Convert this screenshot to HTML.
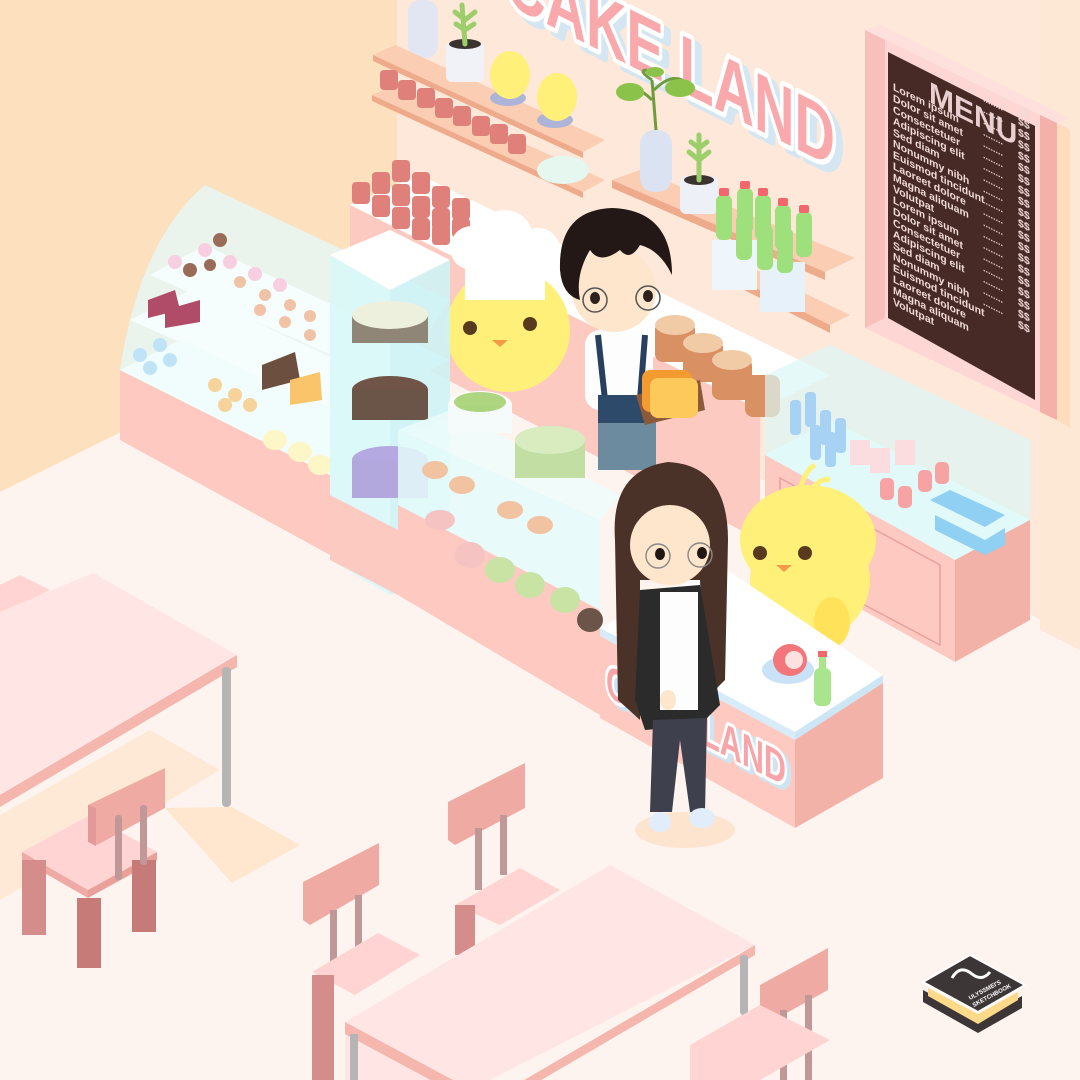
<!DOCTYPE html>
<html><head><meta charset="utf-8"><style>
html,body{margin:0;padding:0;width:1080px;height:1080px;overflow:hidden;background:#fef4ef}
svg{display:block}
text{font-family:"Liberation Sans",sans-serif}
</style></head><body>
<svg width="1080" height="1080" viewBox="0 0 1080 1080" xmlns="http://www.w3.org/2000/svg">
<rect width="1080" height="1080" fill="#fef4ef"/>
<polygon points="0,0 397,0 397,295 0,492" fill="#fde0bd"/>
<polygon points="397,0 1080,0 1080,640 397,295" fill="#fee8d9"/>
<polygon points="1040,0 1080,0 1080,650 1040,630" fill="#fde7d5"/>

<g transform="translate(505,3) skewY(26.57)">
<text x="7" y="4" font-size="82" font-weight="bold" textLength="330" lengthAdjust="spacingAndGlyphs" fill="#d3e6f2" stroke="#d3e6f2" stroke-width="10" stroke-linejoin="round">CAKE LAND</text>
<text x="0" y="0" font-size="82" font-weight="bold" textLength="330" lengthAdjust="spacingAndGlyphs" fill="#fff" stroke="#fff" stroke-width="10" stroke-linejoin="round">CAKE LAND</text>
<text x="0" y="0" font-size="82" font-weight="bold" textLength="330" lengthAdjust="spacingAndGlyphs" fill="#f9a9ab">CAKE LAND</text>
</g>

<polygon points="1057,123 1070,130 1070,428 1057,420" fill="#fedcbc"/>
<polygon points="865,30 880,25 1070,118 1057,123" fill="#ffe0dd"/>
<polygon points="865,30 1057,123 1057,420 865,328" fill="#fed6d3"/>
<polygon points="1040,115 1057,123 1057,420 1040,412" fill="#f4b1a9"/>
<polygon points="865,30 885,40 885,318 865,328" fill="#f7c0ba"/>
<polygon points="888,52 1035,126 1035,400 888,318" fill="#472a26"/>
<g transform="translate(893,90) skewY(26.57)" fill="#f1dad8" font-weight="bold" font-size="10.5">
<text x="36" y="-6" font-size="30" fill="#e9cfd0">MENU</text>
<text x="0" y="0">Lorem ipsum</text><text x="0" y="11.3">Dolor sit amet</text><text x="0" y="22.6">Consectetuer</text><text x="0" y="33.9">Adipiscing elit</text><text x="0" y="45.2">Sed diam</text><text x="0" y="56.5">Nonummy nibh</text><text x="0" y="67.8">Euismod tincidunt</text><text x="0" y="79.1">Laoreet dolore</text><text x="0" y="90.4">Magna aliquam</text><text x="0" y="101.7">Volutpat</text><text x="0" y="113">Lorem ipsum</text><text x="0" y="124.3">Dolor sit amet</text><text x="0" y="135.6">Consectetuer</text><text x="0" y="146.9">Adipiscing elit</text><text x="0" y="158.2">Sed diam</text><text x="0" y="169.5">Nonummy nibh</text><text x="0" y="180.8">Euismod tincidunt</text><text x="0" y="192.1">Laoreet dolore</text><text x="0" y="203.4">Magna aliquam</text><text x="0" y="214.7">Volutpat</text>
<g font-size="9">
<text x="90" y="-34">........</text><text x="90" y="-22.7">........</text><text x="90" y="-11.4">........</text><text x="90" y="0">........</text><text x="90" y="11.3">........</text><text x="90" y="22.6">........</text><text x="90" y="33.9">........</text><text x="90" y="45.2">........</text><text x="90" y="56.5">........</text><text x="90" y="67.8">........</text><text x="90" y="79.1">........</text><text x="90" y="90.4">........</text><text x="90" y="101.7">........</text><text x="90" y="113">........</text><text x="90" y="124.3">........</text><text x="90" y="135.6">........</text><text x="90" y="146.9">........</text><text x="90" y="158.2">........</text><text x="90" y="169.5">........</text>
</g>
<g font-size="10.5">
<text x="125" y="-40">$$</text><text x="125" y="-28.7">$$</text><text x="125" y="-17.4">$$</text><text x="125" y="-6">$$</text><text x="125" y="5.3">$$</text><text x="125" y="16.6">$$</text><text x="125" y="27.9">$$</text><text x="125" y="39.2">$$</text><text x="125" y="50.5">$$</text><text x="125" y="61.8">$$</text><text x="125" y="73.1">$$</text><text x="125" y="84.4">$$</text><text x="125" y="95.7">$$</text><text x="125" y="107">$$</text><text x="125" y="118.3">$$</text><text x="125" y="129.6">$$</text><text x="125" y="140.9">$$</text><text x="125" y="152.2">$$</text><text x="125" y="163.5">$$</text><text x="125" y="174.8">$$</text>
</g>
</g>

<rect x="408" y="0" width="30" height="58" rx="12" fill="#e2e6f2"/>
<polygon points="373,55 395,45 605,140 583,152" fill="#fbcdb2"/>
<polygon points="373,55 583,152 583,158 373,61" fill="#eeab8c"/>
<polygon points="372,95 395,85 605,180 583,192" fill="#fbcdb2"/>
<polygon points="372,95 583,192 583,198 372,101" fill="#eeab8c"/>
<g fill="#e0807a">
<rect x="380" y="70" width="18" height="20" rx="4"/><rect x="398" y="80" width="18" height="20" rx="4"/><rect x="417" y="88" width="18" height="20" rx="4"/><rect x="435" y="98" width="18" height="20" rx="4"/><rect x="453" y="106" width="18" height="20" rx="4"/><rect x="472" y="116" width="18" height="20" rx="4"/><rect x="490" y="124" width="18" height="20" rx="4"/><rect x="508" y="134" width="18" height="20" rx="4"/>
</g>
<rect x="446" y="42" width="38" height="40" rx="6" fill="#f1f2f8"/><ellipse cx="465" cy="44" rx="16" ry="5" fill="#3b332f"/>
<path d="M465 44 L462 5 M465 20 l-10 -8 M465 20 l10 -8 M465 30 l-9 -6 M465 30 l9 -6" stroke="#9ccf6b" stroke-width="5" stroke-linecap="round" fill="none"/>
<ellipse cx="508" cy="98" rx="18" ry="8" fill="#aeb4d8"/><ellipse cx="510" cy="75" rx="20" ry="24" fill="#fff07a"/>
<ellipse cx="555" cy="120" rx="18" ry="8" fill="#aeb4d8"/><ellipse cx="557" cy="97" rx="20" ry="24" fill="#fff07a"/>
<ellipse cx="563" cy="170" rx="26" ry="14" fill="#e6f7ef"/>

<polygon points="612,180 640,170 855,258 825,272" fill="#fbcdb2"/>
<polygon points="612,180 825,272 825,280 612,188" fill="#eeab8c"/>
<polygon points="720,270 740,262 850,315 830,325" fill="#fbcdb2"/>
<polygon points="720,270 830,325 830,333 720,278" fill="#eeab8c"/>
<rect x="712" y="240" width="45" height="50" fill="#eef6fc"/><rect x="760" y="262" width="45" height="50" fill="#e6f1fa"/>
<rect x="640" y="130" width="32" height="62" rx="14" fill="#dbe2f2"/>
<path d="M656 130 L652 80 M652 100 q-20 -20 -30 -5 M654 90 q20 -20 35 -5 M652 80 q-15 -10 -5 -10" stroke="#6e9c3b" stroke-width="3" fill="none"/>
<ellipse cx="630" cy="92" rx="14" ry="9" fill="#8bc34a"/><ellipse cx="680" cy="88" rx="15" ry="9" fill="#8bc34a"/><ellipse cx="655" cy="72" rx="9" ry="5" fill="#8bc34a"/>
<rect x="680" y="176" width="38" height="38" rx="6" fill="#eef0f8"/><ellipse cx="699" cy="180" rx="15" ry="5" fill="#3b332f"/>
<path d="M699 180 L699 135 M699 160 l-10 -8 M699 160 l10 -8 M699 148 l-8 -6 M699 148 l8 -6" stroke="#9ccf6b" stroke-width="5" stroke-linecap="round" fill="none"/>
<g fill="#9ee07b">
<rect x="716" y="195" width="16" height="45" rx="6"/><rect x="737" y="188" width="16" height="45" rx="6"/><rect x="755" y="195" width="16" height="45" rx="6"/><rect x="775" y="205" width="16" height="45" rx="6"/><rect x="796" y="212" width="16" height="45" rx="6"/><rect x="736" y="215" width="16" height="45" rx="6"/><rect x="757" y="225" width="16" height="45" rx="6"/><rect x="777" y="228" width="16" height="45" rx="6"/>
</g>
<g fill="#f2676b"><rect x="719" y="188" width="10" height="8" rx="2"/><rect x="740" y="181" width="10" height="8" rx="2"/><rect x="758" y="188" width="10" height="8" rx="2"/><rect x="778" y="198" width="10" height="8" rx="2"/><rect x="799" y="205" width="10" height="8" rx="2"/></g>

<polygon points="350,205 420,175 830,375 760,410" fill="#ffffff"/>
<polygon points="350,205 760,410 760,540 350,330" fill="#fdcac2"/>
<g fill="#e0807a">
<rect x="352" y="182" width="18" height="22" rx="4"/><rect x="372" y="172" width="18" height="22" rx="4"/><rect x="392" y="160" width="18" height="22" rx="4"/><rect x="372" y="195" width="18" height="22" rx="4"/><rect x="392" y="184" width="18" height="22" rx="4"/><rect x="412" y="172" width="18" height="22" rx="4"/><rect x="392" y="207" width="18" height="22" rx="4"/><rect x="412" y="196" width="18" height="22" rx="4"/><rect x="432" y="186" width="18" height="22" rx="4"/><rect x="412" y="218" width="18" height="22" rx="4"/><rect x="432" y="208" width="18" height="22" rx="4"/><rect x="452" y="198" width="18" height="22" rx="4"/><rect x="432" y="225" width="18" height="20" rx="4"/><rect x="452" y="218" width="18" height="20" rx="4"/>
</g>
<g fill="#d99062"><rect x="655" y="322" width="40" height="40" rx="8"/><rect x="683" y="340" width="40" height="42" rx="8"/><rect x="712" y="358" width="40" height="42" rx="8"/><rect x="745" y="375" width="35" height="42" rx="8"/></g>
<g fill="#f0cba6"><ellipse cx="675" cy="325" rx="20" ry="10"/><ellipse cx="703" cy="343" rx="20" ry="10"/><ellipse cx="732" cy="360" rx="20" ry="10"/></g>

<polygon points="765,455 830,420 1030,520 955,560" fill="#f2fdfd"/>
<polygon points="765,375 830,345 1030,440 1030,520 955,560 765,455" fill="#dcf7f6" opacity="0.7"/>
<polygon points="765,455 955,560 955,662 765,555" fill="#fdc9c1"/>
<polygon points="955,560 1030,520 1030,620 955,662" fill="#f3b2a7"/>
<polygon points="780,478 940,565 940,645 780,560" fill="none" stroke="#e6a39c" stroke-width="1.5"/>
<g fill="#a7d2f3"><rect x="790" y="400" width="11" height="35" rx="4"/><rect x="805" y="392" width="11" height="35" rx="4"/><rect x="820" y="410" width="11" height="35" rx="4"/><rect x="835" y="418" width="11" height="35" rx="4"/><rect x="810" y="425" width="11" height="35" rx="4"/><rect x="825" y="432" width="11" height="35" rx="4"/></g>
<g fill="#fbdde0"><rect x="850" y="440" width="20" height="25"/><rect x="870" y="448" width="20" height="25"/><rect x="895" y="440" width="20" height="25"/></g>
<g fill="#f7a3a4"><rect x="880" y="478" width="14" height="22" rx="5"/><rect x="898" y="486" width="14" height="22" rx="5"/><rect x="918" y="470" width="14" height="22" rx="5"/><rect x="935" y="462" width="14" height="22" rx="5"/></g>
<g fill="#8fd0f3"><polygon points="930,500 950,490 1005,515 985,527"/><polygon points="935,515 985,540 985,555 935,530"/><polygon points="985,540 1005,528 1005,545 985,555"/></g>

<ellipse cx="508" cy="330" rx="62" ry="62" fill="#fff07a"/>
<circle cx="470" cy="328" r="7" fill="#5a3a1f"/><circle cx="530" cy="324" r="7" fill="#5a3a1f"/>
<polygon points="492,340 508,340 500,347" fill="#f59a46"/>
<rect x="465" y="260" width="80" height="40" fill="#fff"/>
<circle cx="472" cy="248" r="22" fill="#fff"/><circle cx="505" cy="238" r="28" fill="#fff"/><circle cx="538" cy="250" r="22" fill="#fff"/>

<rect x="585" y="330" width="68" height="80" rx="15" fill="#fdfdfd"/>
<rect x="598" y="395" width="58" height="75" fill="#6d8b9e"/>
<path d="M598 335 L605 400 M645 335 L640 400" stroke="#28405e" stroke-width="6"/>
<rect x="598" y="395" width="48" height="28" fill="#2d4a6a"/>
<ellipse cx="614" cy="290" rx="42" ry="42" fill="#fde6cc"/>
<path d="M560 270 Q558 210 612 208 Q672 210 672 275 Q660 250 640 245 Q630 262 620 250 Q600 265 590 250 Q575 275 580 300 Q562 295 560 270Z" fill="#231815"/>
<circle cx="595" cy="300" r="12" fill="none" stroke="#555" stroke-width="1.5"/><circle cx="648" cy="298" r="12" fill="none" stroke="#555" stroke-width="1.5"/>
<ellipse cx="595" cy="298" rx="5" ry="6" fill="#2c211c"/><ellipse cx="648" cy="296" rx="5" ry="6" fill="#2c211c"/>
<polygon points="636,395 700,380 705,410 645,425" fill="#8a5a3a"/>
<rect x="642" y="370" width="50" height="42" rx="8" fill="#f39a30"/><rect x="650" y="378" width="48" height="40" rx="8" fill="#fcc95a"/>

<polygon points="120,370 330,475 330,555 120,440" fill="#fdc9c0"/>
<path d="M120,370 Q140,240 205,185 L450,300 L330,475 Z" fill="#e6f7f4" opacity="0.85"/>
<polygon points="150,275 205,245 450,360 400,385" fill="#f5fdfd"/>
<polygon points="130,320 190,290 450,415 400,440" fill="#f5fdfd"/>
<polygon points="120,370 180,340 450,465 330,475" fill="#f1fcfd"/>
<g fill="#f7cfe0"><circle cx="175" cy="262" r="7"/><circle cx="205" cy="250" r="7"/><circle cx="230" cy="262" r="7"/><circle cx="255" cy="274" r="7"/><circle cx="280" cy="285" r="7"/></g>
<g fill="#9a6c57"><circle cx="190" cy="270" r="7"/><circle cx="220" cy="240" r="7"/><circle cx="210" cy="265" r="6"/></g>
<g fill="#f0c3a6"><circle cx="240" cy="282" r="6"/><circle cx="265" cy="295" r="6"/><circle cx="290" cy="305" r="6"/><circle cx="310" cy="316" r="6"/><circle cx="260" cy="310" r="6"/><circle cx="285" cy="322" r="6"/><circle cx="310" cy="335" r="6"/></g>
<polygon points="148,300 175,290 180,310 148,318" fill="#b04c67"/>
<polygon points="165,310 200,300 200,322 165,328" fill="#b04c67"/>
<polygon points="262,365 295,352 300,380 262,390" fill="#6d4f40"/>
<polygon points="290,380 320,372 322,400 290,405" fill="#f9c46a"/>
<g fill="#bfe3f7"><circle cx="140" cy="355" r="7"/><circle cx="160" cy="345" r="7"/><circle cx="150" cy="368" r="7"/><circle cx="170" cy="360" r="7"/></g>
<g fill="#f5d39a"><circle cx="215" cy="385" r="7"/><circle cx="235" cy="395" r="7"/><circle cx="225" cy="405" r="7"/><circle cx="250" cy="405" r="7"/></g>
<g fill="#fdf7c7"><ellipse cx="275" cy="440" rx="12" ry="10"/><ellipse cx="300" cy="452" rx="12" ry="10"/><ellipse cx="320" cy="465" rx="12" ry="10"/></g>

<polygon points="330,255 390,230 450,260 390,290" fill="#ffffff"/>
<polygon points="330,255 390,290 390,595 330,560" fill="#d9f8f8" opacity="0.9"/>
<polygon points="390,290 450,260 450,560 390,595" fill="#cff3f5" opacity="0.9"/>
<ellipse cx="390" cy="315" rx="38" ry="14" fill="#efeedd"/><rect x="352" y="315" width="76" height="28" fill="#8f8677"/><ellipse cx="390" cy="315" rx="38" ry="14" fill="#eef0de"/>
<ellipse cx="390" cy="390" rx="38" ry="14" fill="#6f5447"/><rect x="352" y="390" width="76" height="30" fill="#6b5448"/>
<ellipse cx="390" cy="460" rx="38" ry="14" fill="#b4a9e0"/><rect x="352" y="460" width="76" height="38" fill="#b2a8de"/>
<polygon points="330,495 398,530 398,595 330,560" fill="#fdcac2"/>

<polygon points="398,430 450,410 620,495 600,520" fill="#eefcfc" opacity="0.8"/>
<polygon points="398,505 600,610 600,715 398,595" fill="#fdc9c0"/>
<polygon points="398,430 600,520 600,610 398,505" fill="#e4fafa" opacity="0.85"/>
<ellipse cx="480" cy="405" rx="32" ry="14" fill="#fff"/><rect x="448" y="405" width="64" height="28" fill="#f5fbfb"/><ellipse cx="480" cy="402" rx="26" ry="10" fill="#8bc34a" opacity="0.7"/>
<ellipse cx="550" cy="440" rx="35" ry="14" fill="#cfe6b0"/><rect x="515" y="440" width="70" height="38" fill="#c2dea3"/><ellipse cx="550" cy="440" rx="35" ry="14" fill="#d8ecc0"/>
<g fill="#f2c3a0"><ellipse cx="435" cy="470" rx="13" ry="9"/><ellipse cx="462" cy="485" rx="13" ry="9"/><ellipse cx="510" cy="510" rx="13" ry="9"/><ellipse cx="540" cy="525" rx="13" ry="9"/></g>
<g fill="#c9e3a5"><ellipse cx="500" cy="570" rx="15" ry="13"/><ellipse cx="530" cy="585" rx="15" ry="13"/><ellipse cx="565" cy="600" rx="15" ry="13"/></g>
<g fill="#f4c3c2"><ellipse cx="470" cy="555" rx="15" ry="13"/><ellipse cx="440" cy="520" rx="15" ry="10"/></g>
<ellipse cx="590" cy="620" rx="13" ry="12" fill="#6b5448"/>

<ellipse cx="810" cy="580" rx="60" ry="60" fill="#fff07a"/>
<ellipse cx="808" cy="540" rx="68" ry="55" fill="#fff07a"/>
<path d="M800 490 q5 -20 15 -25 M810 492 q10 -15 20 -12" stroke="#fff07a" stroke-width="5" fill="none"/>
<circle cx="760" cy="553" r="7" fill="#5a3a1f"/><circle cx="805" cy="553" r="7" fill="#5a3a1f"/>
<polygon points="776,565 792,565 784,572" fill="#f59a46"/>
<ellipse cx="832" cy="622" rx="18" ry="25" fill="#ffe25a"/>

<polygon points="600,628 720,565 883,675 795,732" fill="#ffffff"/>
<polygon points="600,628 795,732 795,740 600,636" fill="#d7ecf8"/>
<polygon points="795,732 883,675 883,683 795,740" fill="#cde6f5"/>
<polygon points="600,636 795,740 795,828 600,718" fill="#fdc9c0"/>
<polygon points="795,740 883,683 883,778 795,828" fill="#f3b2a7"/>
<g transform="translate(606,696) skewY(26.57)">
<text x="4" y="2" font-size="46" font-weight="bold" textLength="180" lengthAdjust="spacingAndGlyphs" fill="#cfe4f2" stroke="#cfe4f2" stroke-width="8" stroke-linejoin="round">CAKE LAND</text>
<text x="0" y="0" font-size="46" font-weight="bold" textLength="180" lengthAdjust="spacingAndGlyphs" fill="#fff" stroke="#fff" stroke-width="7" stroke-linejoin="round">CAKE LAND</text>
<text x="0" y="0" font-size="46" font-weight="bold" textLength="180" lengthAdjust="spacingAndGlyphs" fill="#f7a5a8">CAKE LAND</text>
</g>
<ellipse cx="788" cy="670" rx="26" ry="14" fill="#c9e2f7"/><ellipse cx="790" cy="660" rx="17" ry="16" fill="#f2767a"/><ellipse cx="794" cy="660" rx="9" ry="9" fill="#fde1e1"/>
<rect x="814" y="668" width="17" height="38" rx="6" fill="#a8e58c"/><rect x="819" y="652" width="7" height="18" fill="#a8e58c"/><rect x="818" y="651" width="9" height="6" fill="#f2676b"/>

<ellipse cx="685" cy="830" rx="50" ry="18" fill="#fde4cf"/>
<path d="M615 540 Q610 470 668 462 Q728 465 728 540 L725 680 L705 700 L700 580 L640 580 L640 720 L618 700 Z" fill="#4a3228"/>
<path d="M640 590 L700 585 L720 705 L700 725 L645 730 L635 700 Z" fill="#2b2b2b"/>
<rect x="660" y="592" width="38" height="118" fill="#fdfdfd"/>
<path d="M653 720 L707 718 L705 812 L690 812 L680 740 L672 812 L650 812 Z" fill="#3f404e"/>
<ellipse cx="660" cy="822" rx="11" ry="10" fill="#e1edfb"/><ellipse cx="702" cy="818" rx="13" ry="10" fill="#e1edfb"/>
<ellipse cx="670" cy="545" rx="40" ry="40" fill="#fde6cc"/>
<path d="M628 530 Q630 470 670 470 Q715 472 712 530 Q700 505 690 490 Q670 505 640 505 Z" fill="#4a3228"/>
<circle cx="658" cy="556" r="12" fill="none" stroke="#888" stroke-width="1.4"/><circle cx="700" cy="555" r="12" fill="none" stroke="#888" stroke-width="1.4"/>
<ellipse cx="660" cy="554" rx="5" ry="6" fill="#1f1713"/><ellipse cx="702" cy="553" rx="5" ry="6" fill="#1f1713"/>
<ellipse cx="668" cy="700" rx="8" ry="10" fill="#fde6cc"/>

<polygon points="0,585 20,575 50,590 0,615" fill="#ffd4d3"/>
<polygon points="0,612 93,573 237,655 0,795" fill="#ffe6e4"/>
<polygon points="0,795 237,655 237,667 0,807" fill="#f4b6ad"/>
<polygon points="0,815 150,730 220,770 70,860 0,900" fill="#fee6cf" opacity="0.8"/>
<rect x="222" y="667" width="9" height="140" rx="4" fill="#b5b5b5"/>
<polygon points="165,808 232,807 300,845 232,883" fill="#fee6cf"/>
<polygon points="22,852 90,815 157,852 88,890" fill="#ffd4d3"/>
<polygon points="22,852 88,890 88,898 22,860" fill="#f0aaa5"/>
<polygon points="88,890 157,852 157,860 88,898" fill="#eaa09a"/>
<rect x="22" y="860" width="24" height="75" fill="#d48d8a"/>
<rect x="77" y="898" width="24" height="70" fill="#c67b79"/>
<rect x="132" y="860" width="24" height="72" fill="#c67b79"/>
<polygon points="88,805 165,768 165,808 97,845 88,840" fill="#f0aaa4"/>
<polygon points="88,805 96,808 96,846 88,842" fill="#e3999a"/>
<rect x="115" y="815" width="7" height="65" rx="3" fill="#c09898"/><rect x="140" y="805" width="7" height="60" rx="3" fill="#c09898"/>

<polygon points="303,882 379,843 379,885 310,925 303,920" fill="#f0aaa4"/>
<rect x="330" y="910" width="7" height="60" fill="#c09898"/><rect x="355" y="895" width="7" height="60" fill="#c09898"/>
<polygon points="312,972 378,933 420,955 355,995" fill="#ffd4d3"/>
<rect x="312" y="975" width="22" height="110" fill="#d48d8a"/>
<polygon points="448,802 525,763 525,808 455,845 448,840" fill="#f0aaa4"/>
<rect x="475" y="828" width="7" height="62" fill="#c09898"/><rect x="500" y="815" width="7" height="60" fill="#c09898"/>
<polygon points="455,905 520,868 560,890 500,925" fill="#ffd4d3"/>
<rect x="455" y="905" width="20" height="50" fill="#d48d8a"/>
<polygon points="345,1022 610,865 755,945 490,1080 345,1080" fill="#ffe6e4"/>
<polygon points="345,1022 490,1100 490,1112 345,1034" fill="#f4b6ad"/>
<polygon points="755,945 490,1100 490,1110 755,955" fill="#f4b6ad"/>
<rect x="740" y="955" width="8" height="60" rx="3" fill="#b5b5b5"/>
<rect x="350" y="1034" width="8" height="50" fill="#b5b5b5"/>
<polygon points="760,985 828,948 828,990 765,1025 760,1020" fill="#f0aaa4"/>
<rect x="780" y="1010" width="7" height="70" fill="#c09898"/><rect x="805" y="995" width="7" height="85" fill="#c09898"/>
<polygon points="690,1045 760,1005 830,1040 760,1080 690,1080" fill="#ffd4d3"/>

<polygon points="923,982 970,955 1025,985 978,1012" fill="#3d3636" stroke="#fff" stroke-width="2"/>
<polygon points="923,990 978,1020 1022,996 1022,1008 978,1033 923,1002" fill="#3d3636"/>
<polygon points="928,988 978,1014 1018,992 1018,1000 978,1024 928,996" fill="#fdd98a"/>
<path d="M952 978 q8 -14 20 -4 q10 8 18 -2" stroke="#fff" stroke-width="3" fill="none"/>
<g transform="translate(970,1000) rotate(-28)"><text font-size="6" font-weight="bold" fill="#fff">ULYSSMEI'S</text><text y="8" font-size="6" font-weight="bold" fill="#fff">SKETCHBOOK</text></g>
</svg>
</body></html>
